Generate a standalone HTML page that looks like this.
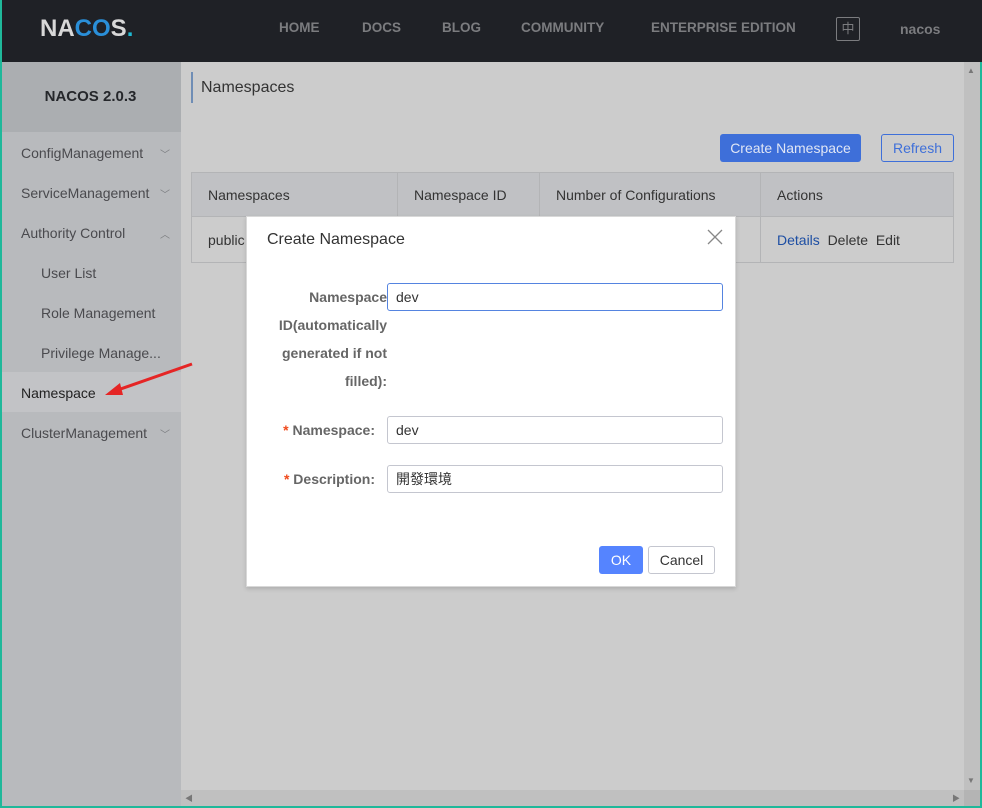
<!DOCTYPE html>
<html><head><meta charset="utf-8"><style>
*{margin:0;padding:0;box-sizing:border-box}
body{width:982px;height:808px;overflow:hidden;font-family:"Liberation Sans","Noto Sans CJK TC",sans-serif;background:#ccc;position:relative;font-size:14px}
.a{position:absolute}
.hdr{left:0;top:0;width:982px;height:62px;background:#1f2126}
.nav{top:20px;color:#7b7c7f;font-weight:bold;font-size:13.5px}
.side{left:0;top:62px;width:181px;height:746px;background:#b8babd}
.mi{left:21px;color:#4a4a4e;font-size:14px}
.chev{left:160px;color:#7b7d80;font-size:10px}
.th{color:#333;font-size:14px;top:187px}
.lbl{color:#666;font-weight:bold;font-size:14px;text-align:right}
.inp{background:#fff;border:1px solid #c4c6cf;border-radius:3px;height:28px;padding-left:8px;line-height:26px;color:#333;font-size:14px}
</style></head><body>
<div class="a hdr"></div>
<div class="a" style="left:40px;top:15px;font-size:24px;font-weight:bold;color:#d8d8d8">NA<span style="color:#2a8fd8">CO</span>S<span style="color:#1fb9d2">.</span></div>
<div class="a nav" style="left:279px">HOME</div>
<div class="a nav" style="left:362px">DOCS</div>
<div class="a nav" style="left:442px">BLOG</div>
<div class="a nav" style="left:521px">COMMUNITY</div>
<div class="a nav" style="left:651px">ENTERPRISE EDITION</div>
<div class="a" style="left:836px;top:17px;width:24px;height:24px;border:1px solid #7b7c7f;border-radius:2px;color:#7b7c7f;font-size:13px;text-align:center;line-height:22px">中</div>
<div class="a nav" style="left:900px;font-size:14px;top:21px">nacos</div>

<div class="a side"></div>
<div class="a" style="left:0;top:62px;width:181px;height:70px;background:#abaeb1"></div>
<div class="a" style="left:0;top:88px;width:181px;text-align:center;font-weight:bold;color:#25272b;font-size:15px">NACOS 2.0.3</div>
<div class="a mi" style="top:145px">ConfigManagement</div><div class="a chev" style="top:146px">﹀</div>
<div class="a mi" style="top:185px">ServiceManagement</div><div class="a chev" style="top:186px">﹀</div>
<div class="a mi" style="top:225px">Authority Control</div><div class="a chev" style="top:226px">︿</div>
<div class="a mi" style="left:41px;top:265px">User List</div>
<div class="a mi" style="left:41px;top:305px">Role Management</div>
<div class="a mi" style="left:41px;top:345px">Privilege Manage...</div>
<div class="a" style="left:0;top:372px;width:181px;height:40px;background:#c2c3c6"></div>
<div class="a mi" style="top:385px;color:#222">Namespace</div>
<div class="a mi" style="top:425px">ClusterManagement</div><div class="a chev" style="top:426px">﹀</div>
<svg class="a" style="left:100px;top:360px" width="95" height="40"><line x1="92" y1="4" x2="12" y2="32" stroke="#e52525" stroke-width="3"/><polygon points="5,35 20,23 23,35" fill="#e52525"/></svg>

<div class="a" style="left:191px;top:72px;width:2px;height:31px;background:#6f8db5"></div>
<div class="a" style="left:201px;top:79px;font-size:16px;color:#333">Namespaces</div>
<div class="a" style="left:720px;top:134px;width:141px;height:28px;background:#3e6fd9;border-radius:3px;color:#e0e6f5;text-align:center;line-height:28px">Create Namespace</div>
<div class="a" style="left:881px;top:134px;width:73px;height:28px;border:1px solid #3e6fd9;border-radius:3px;color:#3e6fd9;text-align:center;line-height:26px">Refresh</div>
<div class="a" style="left:191px;top:172px;width:763px;height:91px;border:1px solid #b3b4b6;background:#ccc"></div>
<div class="a" style="left:192px;top:173px;width:761px;height:44px;background:#c0c1c4;border-bottom:1px solid #b3b4b6"></div>
<div class="a" style="left:397px;top:173px;width:1px;height:89px;background:#b3b4b6"></div>
<div class="a" style="left:539px;top:173px;width:1px;height:89px;background:#b3b4b6"></div>
<div class="a" style="left:760px;top:173px;width:1px;height:89px;background:#b3b4b6"></div>
<div class="a th" style="left:208px">Namespaces</div>
<div class="a th" style="left:414px">Namespace ID</div>
<div class="a th" style="left:556px">Number of Configurations</div>
<div class="a th" style="left:777px">Actions</div>
<div class="a th" style="left:208px;top:232px">public</div>
<div class="a th" style="left:777px;top:232px"><span style="color:#1d4ea3">Details</span>&nbsp; Delete&nbsp; Edit</div>

<div class="a" style="left:964px;top:62px;width:17px;height:728px;background:#c0c0c0"></div>
<div class="a" style="left:967px;top:66px;font-size:8px;color:#777">▲</div>
<div class="a" style="left:967px;top:776px;font-size:8px;color:#777">▼</div>
<div class="a" style="left:181px;top:790px;width:783px;height:17px;background:#c0c0c0"></div>
<div class="a" style="left:964px;top:790px;width:17px;height:17px;background:#b4b4b4"></div>
<div class="a" style="left:185px;top:793px;font-size:8px;color:#777">◀</div>
<div class="a" style="left:952px;top:793px;font-size:8px;color:#777">▶</div>
<div class="a" style="left:0;top:0;width:2px;height:808px;background:#1fb89a"></div>
<div class="a" style="left:980px;top:62px;width:2px;height:746px;background:#1fb89a"></div>
<div class="a" style="left:0;top:806px;width:982px;height:2px;background:#1fb89a"></div>

<div class="a" style="left:246px;top:216px;width:490px;height:371px;background:#fff;border:1px solid #d8d8d8;box-shadow:0 2px 4px rgba(0,0,0,.15)"></div>
<div class="a" style="left:267px;top:231px;font-size:16px;color:#333">Create Namespace</div>
<svg class="a" style="left:707px;top:229px" width="16" height="16"><path d="M1 1L15 15M15 1L1 15" stroke="#888" stroke-width="1.3"/></svg>
<div class="a lbl" style="left:262px;top:283px;width:125px;line-height:28px">Namespace ID(automatically generated if not filled):</div>
<div class="a inp" style="left:387px;top:283px;width:336px;border-color:#5584e0">dev</div>
<div class="a lbl" style="left:262px;top:422px;width:113px"><span style="color:#f04a1c">*</span> Namespace:</div>
<div class="a inp" style="left:387px;top:416px;width:336px">dev</div>
<div class="a lbl" style="left:262px;top:471px;width:113px"><span style="color:#f04a1c">*</span> Description:</div>
<div class="a inp" style="left:387px;top:465px;width:336px">開發環境</div>
<div class="a" style="left:599px;top:546px;width:44px;height:28px;background:#5584ff;border-radius:3px;color:#fff;text-align:center;line-height:28px">OK</div>
<div class="a" style="left:648px;top:546px;width:67px;height:28px;border:1px solid #c4c6cf;border-radius:3px;color:#333;text-align:center;line-height:26px">Cancel</div>
</body></html>
